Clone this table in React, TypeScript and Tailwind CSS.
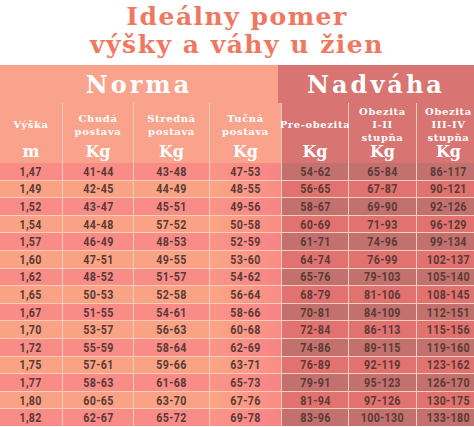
const rows = [
  ["1,47", "41-44", "43-48", "47-53", "54-62", "65-84", "86-117"],
  ["1,49", "42-45", "44-49", "48-55", "56-65", "67-87", "90-121"],
  ["1,52", "43-47", "45-51", "49-56", "58-67", "69-90", "92-126"],
  ["1,54", "44-48", "57-52", "50-58", "60-69", "71-93", "96-129"],
  ["1,57", "46-49", "48-53", "52-59", "61-71", "74-96", "99-134"],
  ["1,60", "47-51", "49-55", "53-60", "64-74", "76-99", "102-137"],
  ["1,62", "48-52", "51-57", "54-62", "65-76", "79-103", "105-140"],
  ["1,65", "50-53", "52-58", "56-64", "68-79", "81-106", "108-145"],
  ["1,67", "51-55", "54-61", "58-66", "70-81", "84-109", "112-151"],
  ["1,70", "53-57", "56-63", "60-68", "72-84", "86-113", "115-156"],
  ["1,72", "55-59", "58-64", "62-69", "74-86", "89-115", "119-160"],
  ["1,75", "57-61", "59-66", "63-71", "76-89", "92-119", "123-162"],
  ["1,77", "58-63", "61-68", "65-73", "79-91", "95-123", "126-170"],
  ["1,80", "60-65", "63-70", "67-76", "81-94", "97-126", "130-175"],
  ["1,82", "62-67", "65-72", "69-78", "83-96", "100-130", "133-180"],
];

const serif = "font-['DejaVu_Serif',serif] font-bold";
const cond = "font-['Roboto',sans-serif] font-bold";

function HeadCell({ lines, unit, right }: { lines: string[]; unit: string; right?: boolean }) {
  return (
    <div
      className={`flex flex-col items-center justify-end pb-[5px] text-white ${
        right ? "bg-[#d87472]" : "bg-[#f9a28c]"
      }`}
    >
      <div className="flex flex-1 flex-col items-center justify-center pt-[2px]">
        {lines.map((l) => (
          <div key={l} className={`${serif} whitespace-nowrap text-[10px] leading-[13px] tracking-[0.6px]`}>
            {l}
          </div>
        ))}
      </div>
      <div className={`${serif} text-[16px] leading-[16px]`}>{unit}</div>
    </div>
  );
}

export default function App() {
  return (
    <div className="h-[427px] w-[474px] overflow-hidden bg-white">
      <div
        className={`${serif} flex h-[65px] flex-col items-center justify-center pb-[3px] text-[25px] leading-[28px] tracking-[1.5px] text-[#f07760]`}
      >
        <div>Ideálny pomer</div>
        <div>výšky a váhy u žien</div>
      </div>

      <div className="flex h-[38px]">
        <div
          className={`${serif} flex w-[278px] items-center justify-center bg-[#f9a28c] pt-[2px] text-[24px] tracking-[3px] text-white`}
        >
          Norma
        </div>
        <div
          className={`${serif} flex flex-1 items-center justify-center bg-[#d87472] pt-[2px] text-[24px] tracking-[3px] text-white`}
        >
          Nadváha
        </div>
      </div>

      <div className="grid h-[59px] grid-cols-[62px_70px_75px_71px_66px_67px_63px] gap-x-px bg-[#fbc9b8]">
        <HeadCell lines={["Výška"]} unit="m" />
        <HeadCell lines={["Chudá", "postava"]} unit="Kg" />
        <HeadCell lines={["Stredná", "postava"]} unit="Kg" />
        <HeadCell lines={["Tučná", "postava"]} unit="Kg" />
        <HeadCell lines={["Pre-obezita"]} unit="Kg" right />
        <HeadCell lines={["Obezita", "I-II", "stupňa"]} unit="Kg" right />
        <HeadCell lines={["Obezita", "III-IV", "stupňa"]} unit="Kg" right />
      </div>

      <div className="grid grid-cols-[62px_70px_75px_71px_66px_67px_63px] gap-px bg-[#fbcdbd] pt-px">
        {rows.map((r, i) =>
          r.map((v, j) => {
            const odd = i % 2 === 1;
            let bg = odd ? "bg-[#faa384]" : "bg-[#f98c87]";
            if (j === 3) bg = odd ? "bg-gradient-to-r from-[#fba584] to-[#f98c86]" : "bg-gradient-to-r from-[#fa9587] to-[#f88486]";
            if (j >= 4) bg = odd ? "bg-[#e1726f]" : "bg-[#c3716e]";
            return (
              <div
                key={`${i}-${j}`}
                className={`${bg} flex h-[16.6px] items-center justify-center overflow-hidden`}
              >
                <span
                  className={`${cond} inline-block scale-x-[0.82] whitespace-nowrap text-[13px] leading-none tracking-[0.4px] text-[#5a3a36]`}
                >
                  {v}
                </span>
              </div>
            );
          })
        )}
      </div>
    </div>
  );
}
